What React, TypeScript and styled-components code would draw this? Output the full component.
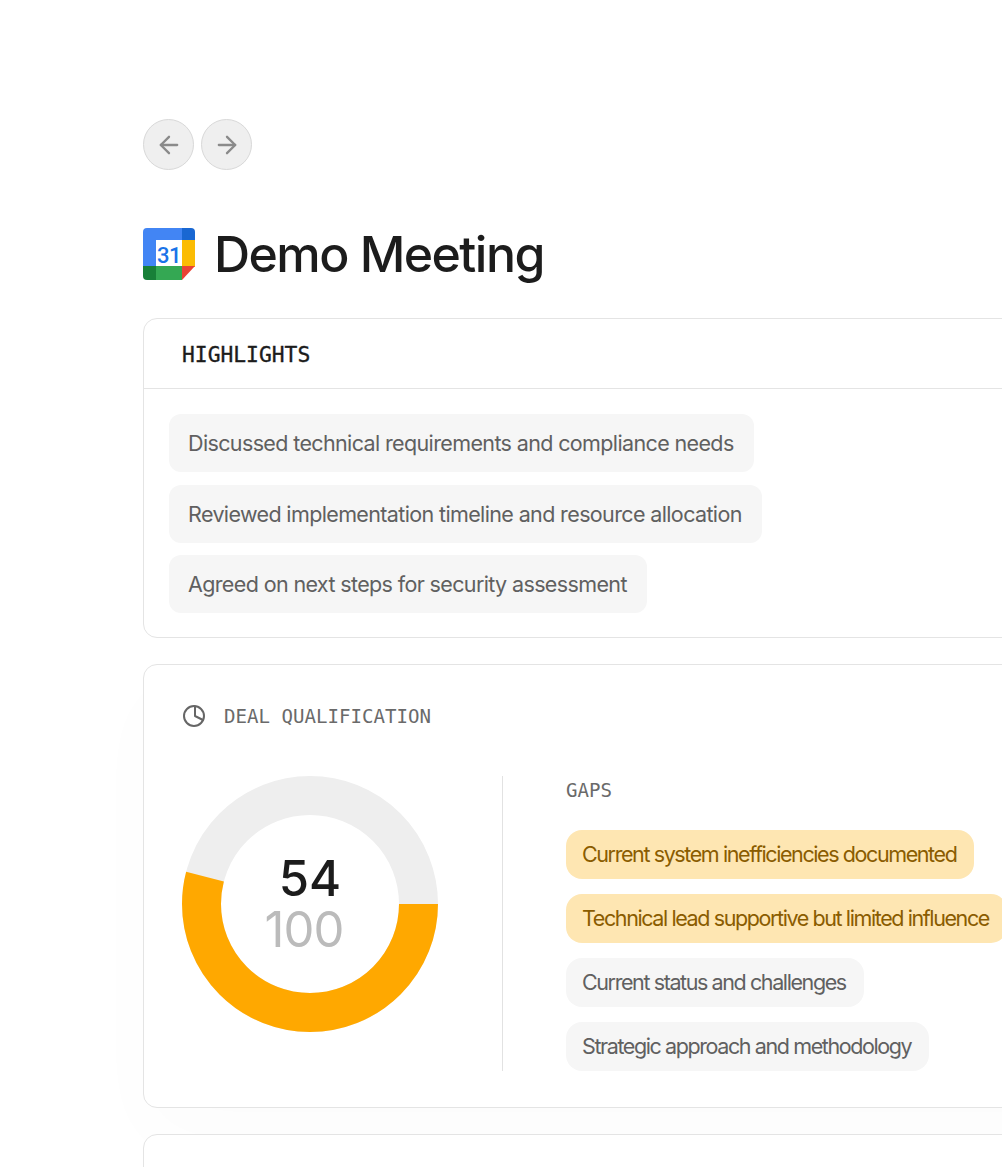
import { ArrowLeft, ArrowRight } from 'lucide-react';
import React from 'react';
import styled, { createGlobalStyle } from 'styled-components';

const GlobalStyle = createGlobalStyle`
  html, body {
    margin: 0;
    padding: 0;
    background: #fff;
    overflow: hidden;
  }
  body {
    font-family: Inter, "Noto Sans", sans-serif;
  }
`;

const HIGHLIGHTS = [
  'Discussed technical requirements and compliance needs',
  'Reviewed implementation timeline and resource allocation',
  'Agreed on next steps for security assessment',
];

const GAPS = [
  { label: 'Current system inefficiencies documented', warn: true },
  { label: 'Technical lead supportive but limited influence', warn: true },
  { label: 'Current status and challenges', warn: false },
  { label: 'Strategic approach and methodology', warn: false },
];

const SCORE = 54;
const RADIUS = 108.5;
const CIRCUMFERENCE = 2 * Math.PI * RADIUS;

const CalendarLogo: React.FC = () => (
  <svg width="52" height="52" viewBox="0 0 52 52">
    <path d="M4 0h35v12H13v27H0V4a4 4 0 0 1 4-4z" fill="#4285f4" />
    <path d="M39 0h9a4 4 0 0 1 4 4v8H39z" fill="#1967d2" />
    <rect x="39" y="12" width="13" height="27" fill="#fbbc04" />
    <rect x="13" y="38" width="26" height="14" fill="#34a853" />
    <path d="M0 38h13v14H4a4 4 0 0 1-4-4z" fill="#188038" />
    <path d="M39 38h13L39 52z" fill="#ea4335" />
    <text
      x="26"
      y="34.5"
      textAnchor="middle"
      fontFamily="Roboto, sans-serif"
      fontWeight="500"
      fontSize="22"
      letterSpacing="-0.5"
      fill="#1a73e8"
    >
      31
    </text>
  </svg>
);

const PieIcon: React.FC = () => (
  <svg
    width="24"
    height="24"
    viewBox="0 0 24 24"
    fill="none"
    stroke="#666"
    strokeWidth="2"
    strokeLinecap="round"
    strokeLinejoin="round"
  >
    <circle cx="12" cy="12" r="10" />
    <path d="M13 2.5v9.5l8 4" />
  </svg>
);

const App: React.FC = () => {
  const filled = (SCORE / 100) * CIRCUMFERENCE;

  return (
    <Page>
      <GlobalStyle />
      <NavRow>
        <NavButton>
          <ArrowLeft size={28} strokeWidth={2} />
        </NavButton>
        <NavButton>
          <ArrowRight size={28} strokeWidth={2} />
        </NavButton>
      </NavRow>

      <TitleRow>
        <CalendarLogo />
        <Title>Demo Meeting</Title>
      </TitleRow>

      <Card>
        <CardHeader>HIGHLIGHTS</CardHeader>
        <HighlightList>
          {HIGHLIGHTS.map((text) => (
            <HighlightPill key={text}>{text}</HighlightPill>
          ))}
        </HighlightList>
      </Card>

      <QualificationCard>
        <SectionLabel>
          <PieIcon />
          <span>DEAL QUALIFICATION</span>
        </SectionLabel>
        <QualificationBody>
          <Donut>
            <svg width="256" height="256" viewBox="0 0 256 256">
              <circle
                cx="128"
                cy="128"
                r={RADIUS}
                fill="none"
                stroke="#eeeeee"
                strokeWidth="39"
              />
              <circle
                cx="128"
                cy="128"
                r={RADIUS}
                fill="none"
                stroke="#ffa800"
                strokeWidth="39"
                strokeDasharray={`${filled} ${CIRCUMFERENCE}`}
              />
            </svg>
            <DonutText>
              <Score>{SCORE}</Score>
              <Total>100</Total>
            </DonutText>
          </Donut>
          <Divider />
          <GapsColumn>
            <GapsLabel>GAPS</GapsLabel>
            <GapList>
              {GAPS.map((gap) => (
                <GapPill key={gap.label} $warn={gap.warn}>
                  {gap.label}
                </GapPill>
              ))}
            </GapList>
          </GapsColumn>
        </QualificationBody>
      </QualificationCard>

      <EmptyCard />
    </Page>
  );
};

export default App;

const Page = styled.div`
  width: 1002px;
  height: 1167px;
  box-sizing: border-box;
  padding: 119px 0 0 143px;
  overflow: hidden;
`;

const NavRow = styled.div`
  display: flex;
  gap: 7px;
`;

const NavButton = styled.div`
  width: 51px;
  height: 51px;
  box-sizing: border-box;
  display: flex;
  align-items: center;
  justify-content: center;
  border-radius: 50%;
  border: 1px solid #d8d8d8;
  background: #efefef;
  color: #8a8a8a;
`;

const TitleRow = styled.div`
  display: flex;
  align-items: center;
  gap: 19px;
  margin-top: 58px;
  height: 52px;
`;

const Title = styled.h1`
  margin: 0;
  font-size: 50px;
  font-weight: 500;
  line-height: 52px;
  letter-spacing: -1.55px;
  color: #1c1c1c;
`;

const Card = styled.div`
  width: 1000px;
  box-sizing: border-box;
  margin-top: 38px;
  border: 1px solid #e4e4e4;
  border-radius: 14px;
  background: #fff;
`;

const CardHeader = styled.div`
  height: 70px;
  box-sizing: border-box;
  display: flex;
  align-items: center;
  padding: 1px 0 0 38px;
  border-bottom: 1px solid #e4e4e4;
  font-family: "DejaVu Sans Mono", monospace;
  font-size: 21.3px;
  color: #1c1c1c;
  -webkit-text-stroke: 0.35px #1c1c1c;
`;

const HighlightList = styled.div`
  display: flex;
  flex-direction: column;
  align-items: flex-start;
  gap: 12.5px;
  padding: 25px 0 24px 25px;
`;

const HighlightPill = styled.div`
  height: 58px;
  box-sizing: border-box;
  display: flex;
  align-items: center;
  padding: 0 20px 0 19px;
  border-radius: 12px;
  background: #f6f6f6;
  font-size: 21.5px;
  letter-spacing: -0.63px;
  color: #606060;
  white-space: nowrap;
`;

const QualificationCard = styled(Card)`
  margin-top: 26px;
  height: 444px;
  padding: 38px 0 0 38px;
  box-shadow: 0 30px 80px rgba(0, 0, 0, 0.015);
`;

const SectionLabel = styled.div`
  display: flex;
  align-items: center;
  gap: 18px;
  height: 26px;
  font-family: "DejaVu Sans Mono", monospace;
  font-size: 19.1px;
  color: #6a6a6a;
`;

const QualificationBody = styled.div`
  display: flex;
  margin-top: 47px;
`;

const Donut = styled.div`
  position: relative;
  width: 256px;
  height: 256px;
  flex: none;
`;

const DonutText = styled.div`
  position: absolute;
  inset: 0;
  display: flex;
  flex-direction: column;
  align-items: center;
  justify-content: center;
`;

const Score = styled.div`
  font-size: 49px;
  font-weight: 450;
  line-height: 51px;
  color: #1c1c1c;
`;

const Total = styled.div`
  font-size: 49px;
  line-height: 51px;
  letter-spacing: -1px;
  color: #bbbbbb;
  margin-right: 12px;
`;

const Divider = styled.div`
  width: 1px;
  height: 295px;
  margin: 0 63px 0 64px;
  background: #e2e2e2;
`;

const GapsColumn = styled.div`
  display: flex;
  flex-direction: column;
  align-items: flex-start;
`;

const GapsLabel = styled.div`
  height: 26px;
  margin-top: 1px;
  display: flex;
  align-items: center;
  font-family: "DejaVu Sans Mono", monospace;
  font-size: 19.1px;
  color: #6a6a6a;
`;

const GapList = styled.div`
  display: flex;
  flex-direction: column;
  align-items: flex-start;
  gap: 15.5px;
  margin-top: 27px;
`;

const GapPill = styled.div<{ $warn: boolean }>`
  height: 48.5px;
  box-sizing: border-box;
  display: flex;
  align-items: center;
  padding: 0 18px 0 16px;
  border-radius: 16px;
  background: ${(p) => (p.$warn ? '#fee6b2' : '#f6f6f6')};
  color: ${(p) => (p.$warn ? '#8a5c00' : '#606060')};
  font-size: 21.5px;
  letter-spacing: -1.4px;
  white-space: nowrap;
`;

const EmptyCard = styled(Card)`
  margin-top: 26px;
  height: 200px;
`;
